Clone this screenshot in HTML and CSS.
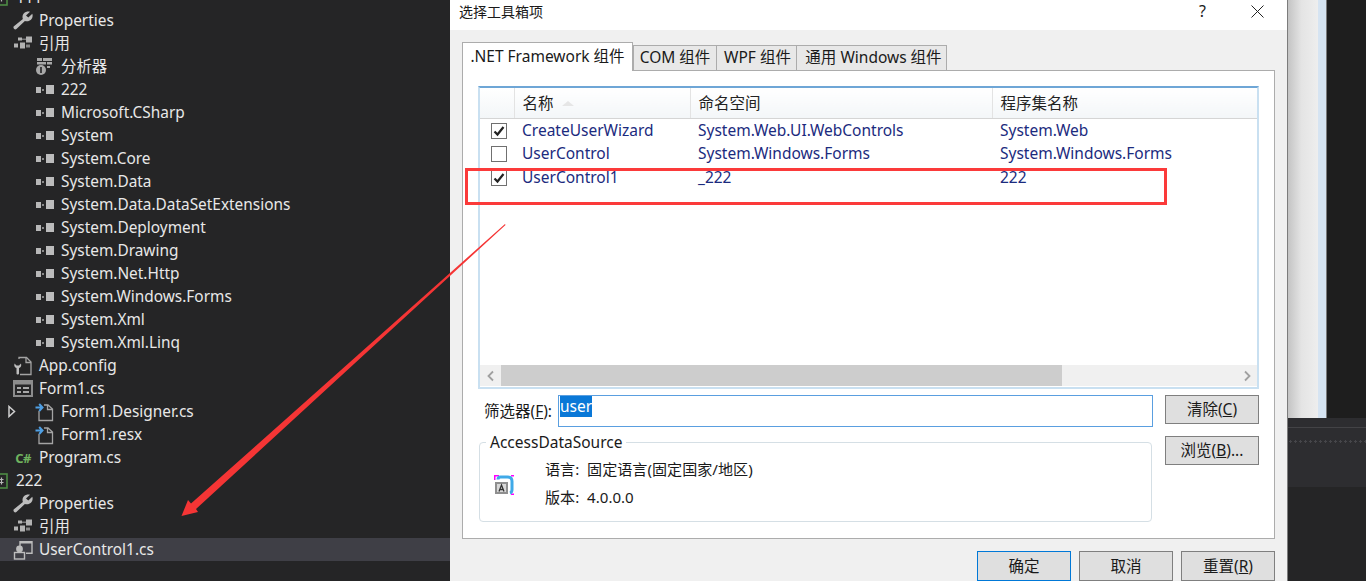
FILE: index.html
```html
<!DOCTYPE html>
<html lang="zh-CN">
<head>
<meta charset="utf-8">
<title>选择工具箱项</title>
<link rel="stylesheet" href="styles.css">
</head>
<body>
<svg class="defs" width="0" height="0" aria-hidden="true">
  <symbol id="i-wrench" viewBox="0 0 20 20"><path fill="#bdbdbd" d="M19.300 2.800 15.300 6.600 13 4.500 17 .7C13.400-.4 9.500 2 9.500 5.900c0 .8.100 1.400.4 2L.9 15.200c-1.500 1.400.8 4.300 2.500 2.800l8.500-8.100c.7.300 1.400.4 2.100.4 3.900 0 6.600-3.600 5.300-7.500Z"/></symbol>
  <symbol id="i-ref" viewBox="0 0 20 20"><g fill="#b2b2b2"><rect x="1" y="9.500" width="4" height="4"/><rect x="7" y="8.500" width="5" height="6"/><rect x="13" y="2.500" width="6" height="6"/><rect x="5" y="3.500" width="4" height="3"/><rect x="9" y="4.500" width="4" height="1.500" opacity=".6"/><rect x="13" y="10.500" width="4" height="3" opacity=".7"/></g></symbol>
  <symbol id="i-analyzer" viewBox="0 0 20 20"><g fill="#a8a8a8"><rect x="2" y="1" width="5" height="3"/><rect x="8" y="1" width="9" height="3"/><rect x="2" y="5" width="9" height="2.500"/><rect x="12" y="5" width="5" height="2.500"/><rect x="12" y="9" width="3" height="2"/><circle cx="6" cy="13" r="5"/></g><rect x="5.200" y="10" width="1.600" height="6" fill="#252526"/></symbol>
  <symbol id="i-asm" viewBox="0 0 20 20"><rect x="1" y="7" width="5" height="6" fill="#b8b8b8"/><rect x="7" y="9" width="2" height="2" fill="#8a8a8a"/><rect x="11" y="5" width="8" height="9" fill="#bcbcbc"/></symbol>
  <symbol id="i-config" viewBox="0 0 20 20"><path fill="none" stroke="#a4a4a4" stroke-width="1.300" d="M6 3V1.500h7.500L18 6v12.500H7"/><path fill="none" stroke="#a4a4a4" stroke-width="1.300" d="M13 2v4.500h5"/><path fill="#bdbdbd" d="M1.500 7.500C.8 10 1.800 11.500 3.500 12v5.500c0 1.300 2.500 1.300 2.500 0V12c1.700-.6 2.700-2 2-4.500L6 9.500H3.500Z"/></symbol>
  <symbol id="i-form" viewBox="0 0 20 20"><rect x="1" y="2" width="18" height="15" fill="none" stroke="#8c8c8c" stroke-width="2"/><rect x="1" y="2" width="18" height="3.500" fill="#8c8c8c"/><rect x="4" y="8" width="4" height="2" fill="#a8a8a8"/><rect x="10" y="8" width="6" height="2" fill="#a8a8a8"/><rect x="4" y="12" width="4" height="2" fill="#a8a8a8"/><rect x="10" y="12" width="6" height="2" fill="#a8a8a8"/></symbol>
  <symbol id="i-file" viewBox="0 0 20 20"><path fill="none" stroke="#a4a4a4" stroke-width="1.300" d="M4 9v9.500h13.500V7L13 3H9M12.500 3.500V7.500h5"/><path fill="none" stroke="#4f9fe3" stroke-width="2" d="M.500 5.500H7M4.200 2 7.500 5.500 4.200 9"/></symbol>
  <symbol id="i-user" viewBox="0 0 20 20"><path fill="none" stroke="#bdbdbd" stroke-width="1.400" d="M7 6V1.700h12v11.600h-6"/><rect x="7" y="1" width="12" height="2.500" fill="#bdbdbd"/><rect x="1.500" y="12.500" width="10" height="6.500" fill="#3f3f46" stroke="#bdbdbd" stroke-width="1.400"/><circle cx="6.500" cy="9" r="3.400" fill="#bdbdbd"/></symbol>
  <symbol id="i-proj" viewBox="0 0 20 20"><rect x="3" y="3" width="14" height="14" fill="none" stroke="#4e8b45" stroke-width="1.600"/><path fill="none" stroke="#b8b8b8" stroke-width="1.200" d="M8.500 6.500v7M11.500 6.500v7M6.500 8.500h7M6.500 11.500h7"/></symbol>
</svg>

<div class="screen">
  <ul class="tree">
    <li class="row lv0 first"><svg class="ico"><use href="#i-proj"/></svg>111</li>
    <li class="row lv1"><svg class="ico"><use href="#i-wrench"/></svg>Properties</li>
    <li class="row lv1"><svg class="ico"><use href="#i-ref"/></svg>引用</li>
    <li class="row lv2"><svg class="ico"><use href="#i-analyzer"/></svg>分析器</li>
    <li class="row lv2"><svg class="ico"><use href="#i-asm"/></svg>222</li>
    <li class="row lv2"><svg class="ico"><use href="#i-asm"/></svg>Microsoft.CSharp</li>
    <li class="row lv2"><svg class="ico"><use href="#i-asm"/></svg>System</li>
    <li class="row lv2"><svg class="ico"><use href="#i-asm"/></svg>System.Core</li>
    <li class="row lv2"><svg class="ico"><use href="#i-asm"/></svg>System.Data</li>
    <li class="row lv2"><svg class="ico"><use href="#i-asm"/></svg>System.Data.DataSetExtensions</li>
    <li class="row lv2"><svg class="ico"><use href="#i-asm"/></svg>System.Deployment</li>
    <li class="row lv2"><svg class="ico"><use href="#i-asm"/></svg>System.Drawing</li>
    <li class="row lv2"><svg class="ico"><use href="#i-asm"/></svg>System.Net.Http</li>
    <li class="row lv2"><svg class="ico"><use href="#i-asm"/></svg>System.Windows.Forms</li>
    <li class="row lv2"><svg class="ico"><use href="#i-asm"/></svg>System.Xml</li>
    <li class="row lv2"><svg class="ico"><use href="#i-asm"/></svg>System.Xml.Linq</li>
    <li class="row lv1"><svg class="ico"><use href="#i-config"/></svg>App.config</li>
    <li class="row lv1"><svg class="ico"><use href="#i-form"/></svg>Form1.cs</li>
    <li class="row lvx"><svg class="expander" viewBox="0 0 8 13"><path d="M1 1.500 6.500 6.500 1 11.500Z" fill="none" stroke="#d0d0d0" stroke-width="1.500"/></svg><svg class="ico"><use href="#i-file"/></svg>Form1.Designer.cs</li>
    <li class="row lv2"><svg class="ico"><use href="#i-file"/></svg>Form1.resx</li>
    <li class="row lv1"><span class="ico csharp">C#</span>Program.cs</li>
    <li class="row lv0"><svg class="ico"><use href="#i-proj"/></svg>222</li>
    <li class="row lv1"><svg class="ico"><use href="#i-wrench"/></svg>Properties</li>
    <li class="row lv1"><svg class="ico"><use href="#i-ref"/></svg>引用</li>
    <li class="row lv1 selected"><svg class="ico"><use href="#i-user"/></svg>UserControl1.cs</li>
  </ul>

  <section class="dialog">
    <header class="titlebar">
      <span class="title">选择工具箱项</span>
      <span class="help">?</span>
      <svg class="close" viewBox="0 0 13 13"><path d="M.5.500l12 12M12.500.500l-12 12" stroke="#222" stroke-width="1" fill="none"/></svg>
    </header>
    <div class="tabs">
      <div class="tab active">.NET Framework 组件</div>
      <div class="tab com">COM 组件</div>
      <div class="tab wpf">WPF 组件</div>
      <div class="tab win">通用 Windows 组件</div>
    </div>
    <div class="panel">
      <div class="list">
        <table class="grid">
          <colgroup><col class="c0"><col class="c1"><col class="c2"><col></colgroup>
          <thead>
            <tr><th></th><th><span class="sorted">名称</span></th><th>命名空间</th><th>程序集名称</th></tr>
          </thead>
          <tbody>
            <tr><td><span class="check"><svg viewBox="0 0 14 14"><path d="M2.500 7.500 5.500 10.500 11.500 3" fill="none" stroke="#222" stroke-width="2.200"/></svg></span></td><td>CreateUserWizard</td><td>System.Web.UI.WebControls</td><td>System.Web</td></tr>
            <tr><td><span class="check"></span></td><td>UserControl</td><td>System.Windows.Forms</td><td>System.Windows.Forms</td></tr>
            <tr><td><span class="check"><svg viewBox="0 0 14 14"><path d="M2.500 7.500 5.500 10.500 11.500 3" fill="none" stroke="#222" stroke-width="2.200"/></svg></span></td><td>UserControl1</td><td>_222</td><td>222</td></tr>
          </tbody>
        </table>
        <div class="hscroll">
          <span class="sbtn"><svg viewBox="0 0 8 12"><path d="M6 1.500 1.500 6 6 10.500" fill="none" stroke="#a0a0a0" stroke-width="1.800"/></svg></span>
          <span class="thumb"></span>
          <span class="sbtn end"><svg viewBox="0 0 8 12"><path d="M2 1.500 6.500 6 2 10.500" fill="none" stroke="#a0a0a0" stroke-width="1.800"/></svg></span>
        </div>
      </div>
      <div class="lower">
        <div class="lower-main">
          <div class="filter">
            <label class="filter-label">筛选器(<u>F</u>):</label>
            <div class="filter-input"><span class="selection">user</span></div>
          </div>
          <fieldset class="group">
            <legend>AccessDataSource</legend>
            <div class="group-body">
              <svg class="asset" viewBox="0 0 20 20">
                <path d="M0 0h5v1.500H1.500V5H0ZM17 0h3v1.500h-3ZM18.500 18.500H20V20h-3v-1.500Z" fill="#ff00ff"/>
                <path d="M4 4.500C4 3 5 2 6.500 2h7c3 0 4.500 1.500 4.500 4.500v8c0 2-.5 3-2 3.500" fill="none" stroke="#3fa9e8" stroke-width="3"/>
                <rect x="1" y="7" width="13" height="12" fill="#8f8f8f"/>
                <rect x="3" y="9" width="9" height="8" fill="#d8d8d8"/>
                <path d="M5 16.500 7.500 10l2.500 6.500M5.800 14.500h3.400" stroke="#333" stroke-width="1.300" fill="none"/>
              </svg>
              <div class="meta">
                <div class="meta-line">语言:&nbsp; 固定语言(固定国家/地区)</div>
                <div class="meta-line">版本:&nbsp; 4.0.0.0</div>
              </div>
            </div>
          </fieldset>
        </div>
        <div class="lower-side">
          <button class="btn">清除(<u>C</u>)</button>
          <button class="btn">浏览(<u>B</u>)...</button>
        </div>
      </div>
    </div>
    <footer class="actions">
      <button class="btn primary">确定</button>
      <button class="btn">取消</button>
      <button class="btn">重置(<u>R</u>)</button>
    </footer>
  </section>

  <aside class="backdrop">
    <div class="back-top">
      <div class="shade"></div>
      <div class="paleblue"></div>
      <div class="editor"></div>
    </div>
    <div class="back-panel">
      <div class="back-rule"></div>
      <div class="back-dots"></div>
    </div>
    <div class="back-foot"></div>
  </aside>

  <div class="mark-rect"></div>
  <svg class="mark-arrow" viewBox="0 0 1366 581">
    <polygon points="181.500,516 188,500 191,503.500 505,224 505.500,225 196,509 198,512" fill="#f53535"/>
  </svg>
</div>
</body>
</html>
```

FILE: styles.css
```css
* { box-sizing: border-box; }
html, body { margin: 0; height: 100%; overflow: hidden; background: #252526; }
body { font: 15.5px/23px "Noto Sans", "Noto Sans CJK SC", sans-serif; }
.defs { position: absolute; }

.screen { position: relative; display: flex; width: 1366px; height: 581px; overflow: hidden; }

/* solution tree */
.tree { flex: 0 0 450px; margin: 0; padding: 0; list-style: none; background: #252526; color: #e8e8e8; font-size: 15.4px; overflow: hidden; }
.row { display: flex; align-items: center; height: 23px; white-space: nowrap; }
.first { margin-top: -14px; }
.ico { flex: none; width: 20px; height: 20px; margin-right: 6px; }
.lv0 .ico { margin-left: -10px; }
.lv1 { padding-left: 13px; }
.lv2 { padding-left: 35px; }
.lvx { padding-left: 8px; }
.selected { background: #3f3f46; }
.expander { flex: none; width: 8px; height: 13px; margin-right: 19px; }
.csharp { font-size: 13px; font-weight: 700; color: #6fb35f; line-height: 20px; text-align: center; letter-spacing: -.5px; }

/* dialog */
.dialog { flex: 0 0 838px; display: flex; flex-direction: column; background: #f0f0f0; color: #1a1a1a; border-right: 1px solid #7c7c7c; padding: 0 12px; }
.titlebar { display: flex; align-items: center; height: 30px; margin: 0 -12px; padding: 0 23px 8px 9px; background: #fff; }
.title { font-size: 14px; }
.help { margin-left: auto; margin-right: 45px; font-size: 16px; }
.close { width: 13px; height: 13px; }

.tabs { display: flex; align-items: flex-end; height: 40px; padding-top: 12px; }
.tab { height: 25px; line-height: 23px; border: 1px solid #acacac; border-bottom: 0; background: #e8e8e8; text-align: center; margin-left: -1px; }
.tab.active { position: relative; z-index: 1; width: 171px; height: 29px; line-height: 27px; margin: 0 0 -1px 0; background: #fff; }
.tab.com { width: 84px; margin-left: 0; }
.tab.wpf { width: 81px; padding-left: 2px; }
.tab.win { width: 151px; padding-left: 4px; }

.panel { height: 469px; padding: 15px 15px 0; background: #fff; border: 1px solid #acacac; }
.list { display: flex; flex-direction: column; height: 303px; border: 2px solid #c9e0f1; border-top-color: #6ea6d6; }
.grid { flex: none; width: 100%; table-layout: fixed; border-collapse: collapse; }
.c0 { width: 34px; }
.c1 { width: 176px; }
.c2 { width: 302px; }
.grid th { height: 30px; padding: 2px 0 0 8px; font-weight: 400; text-align: left; color: #222; background: linear-gradient(#fff, #f3f6f8); border-bottom: 1px solid #d5d5d5; border-left: 1px solid #e3e3e3; }
.grid th:first-child { border-left: 0; }
.grid tbody tr { height: 24px; }
.grid td { padding: 0 0 0 8px; color: #1b2b7e; white-space: nowrap; overflow: hidden; line-height: 23px; height: 24px; vertical-align: top; }
.grid td:first-child { padding-left: 11px; }
.sorted::after { content: ""; display: inline-block; margin: 0 0 3px 8px; border-left: 6px solid transparent; border-right: 6px solid transparent; border-bottom: 5px solid #e6e6e6; }
.check { display: block; width: 16px; height: 16px; margin-top: 4px; border: 1px solid #707070; background: #fff; }
.check svg { display: block; width: 14px; height: 14px; }

.hscroll { flex: none; display: flex; height: 21px; margin-top: auto; margin-bottom: 1px; background: #f0f0f0; }
.sbtn { flex: none; display: flex; align-items: center; justify-content: center; width: 21px; }
.sbtn.end { margin-left: auto; }
.sbtn svg { width: 8px; height: 12px; }
.thumb { flex: none; width: 561px; background: #cdcdcd; }

.lower { display: flex; gap: 12px; margin-top: 6px; padding-left: 1px; }
.lower-main { flex: 0 0 674px; }
.filter { display: flex; height: 32px; }
.filter-label { flex: 0 0 79px; padding: 5px 0 0 5px; white-space: nowrap; }
.filter-input { flex: 1; border: 1px solid #5a9fe0; padding-left: 1px; line-height: 21px; }
.selection { display: inline-block; background: #0a78d7; color: #fff; height: 21px; vertical-align: top; }
.group { margin: 5px 1px 0 0; padding: 0; height: 90px; border: 1px solid #d5dfe5; border-radius: 4px; }
.group legend { margin-left: 6px; padding: 0 4px; line-height: 20px; }
.group-body { display: flex; align-items: center; gap: 31px; padding: 4px 0 0 14px; }
.asset { flex: none; width: 20px; height: 20px; margin-top: 2px; }
.meta { font-size: 15.1px; }
.meta-line { line-height: 27.5px; }

.lower-side { flex: 0 0 94px; display: flex; flex-direction: column; gap: 12px; }
.btn { width: 94px; height: 29px; padding: 0; font: inherit; line-height: 27px; color: #1a1a1a; background: #dfdfdf; border: 1px solid #7f7f7f; }
.btn.primary { border-color: #0078d7; }
.actions { display: flex; justify-content: flex-end; gap: 8px; margin-top: 12px; }
.actions .btn { flex: none; height: 30px; }

/* backdrop */
.backdrop { flex: 1; display: flex; flex-direction: column; min-width: 0; }
.back-top { display: flex; height: 418px; }
.shade { flex: 0 0 30px; background: linear-gradient(90deg, #c4c4c4, #e4e4e4 45%, #eee); }
.paleblue { flex: 0 0 8px; background: #d6e4f2; }
.editor { flex: 1; background: #1e1e1e; border-left: 1px solid #7a7a7a; }
.back-panel { height: 69px; padding-top: 9px; background: #2d2d30; }
.back-rule { height: 1px; background: #434346; }
.back-dots { height: 5px; margin-top: 11px; background-image: radial-gradient(circle, #46464a 1px, transparent 1.2px); background-size: 5px 5px; }
.back-foot { flex: 1; background: #252526; }

/* annotations drawn over the screenshot */
.mark-rect { position: absolute; left: 465px; top: 168px; width: 702px; height: 37px; border: 3px solid #fb3a3a; }
.mark-arrow { position: absolute; left: 0; top: 0; width: 1366px; height: 581px; pointer-events: none; }
```
